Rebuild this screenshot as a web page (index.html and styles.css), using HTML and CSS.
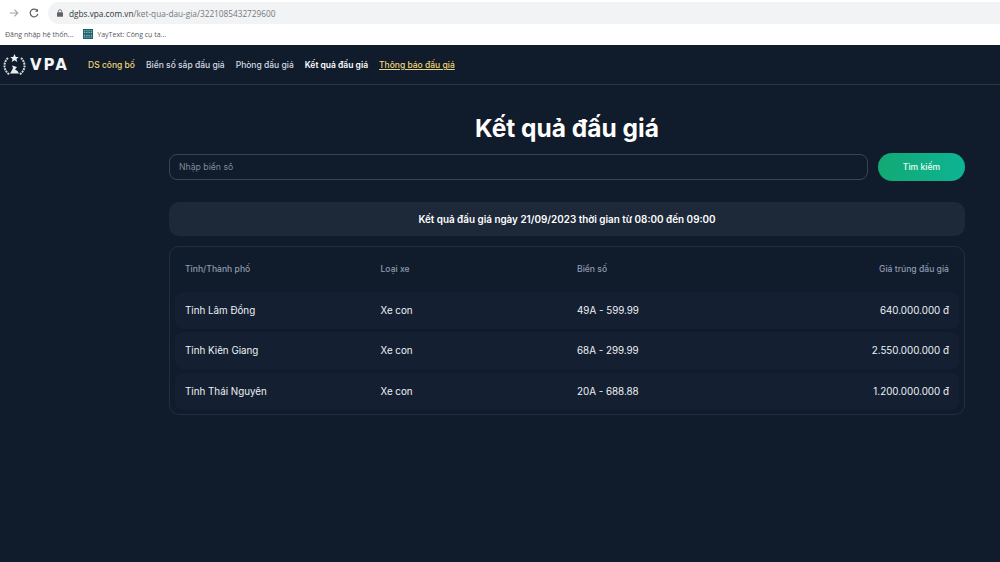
FILE: index.html
```html
<!DOCTYPE html>
<html lang="vi">
<head>
<meta charset="utf-8">
<title>Kết quả đấu giá</title>
<link rel="stylesheet" href="styles.css">
</head>
<body>
<div class="browser">
  <div class="toolbar">
    <svg class="nav-icon arrow" width="10" height="10" viewBox="0 0 12 12"><path d="M1 6h9.500M6.500 2l4 4-4 4" fill="none" stroke="#a6a6a6" stroke-width="1.400"/></svg>
    <svg class="nav-icon reload" width="10" height="10" viewBox="0 0 12 12"><path d="M10 3.600A4.600 4.600 0 1 0 10.600 7" fill="none" stroke="#5f6368" stroke-width="1.500"/><path d="M10.800 1v3.600H7.200z" fill="#5f6368"/></svg>
    <div class="address">
      <svg class="lock" width="6" height="8" viewBox="0 0 7 9"><path d="M1.500 4V2.700a2 2 0 0 1 4 0V4" fill="none" stroke="#5f6368" stroke-width="1"/><rect y="3.600" width="7" height="5.400" rx="1" fill="#5f6368"/></svg>
      <span class="url-host">dgbs.vpa.com.vn</span><span class="url-path">/ket-qua-dau-gia/3221085432729600</span>
    </div>
  </div>
  <div class="bookmarks">
    <span class="bookmark">Đăng nhập hệ thốn...</span>
    <svg class="favicon" width="10" height="10" viewBox="0 0 11 11"><rect width="11" height="11" fill="#17616b"/><path d="M1 2h9M1 4h9M1 7h9M1 9h9" stroke="#d7e6e6" stroke-width="1" stroke-dasharray="1 1"/></svg>
    <span class="bookmark">YayText: Công cụ ta...</span>
  </div>
</div>
<header class="site-header">
  <div class="logo">
    <svg width="25" height="24" viewBox="0 0 25 24">
      <path d="M12.500 1l1.300 3h3l-2.400 2 .9 3-2.800-1.700L9.700 9l.9-3-2.400-2h3z" fill="#f1f3f5"/>
      <path d="M6 5C1.500 9 .6 17 7.500 21.500M19 5c4.500 4 5.400 12-1.500 16.500" fill="none" stroke="#cfd4da" stroke-width="2" stroke-dasharray="2 .8"/>
      <path d="M8 20.500h9l-1.500-2.500H9.500zM10 12.500l5 1.500-2 2.500 2.500 1.500h-6l1.500-3z" fill="#e8ebee"/>
    </svg>
    <span class="logo-text">VPA</span>
  </div>
  <nav class="nav">
    <a class="nav-link gold">DS công bố</a>
    <a class="nav-link">Biển số sắp đấu giá</a>
    <a class="nav-link">Phòng đấu giá</a>
    <a class="nav-link active">Kết quả đấu giá</a>
    <a class="nav-link gold underlined">Thông báo đấu giá</a>
  </nav>
</header>
<main class="content">
  <h1 class="title">Kết quả đấu giá</h1>
  <div class="search">
    <input class="search-input" type="text" placeholder="Nhập biển số">
    <button class="search-button" type="button">Tìm kiếm</button>
  </div>
  <div class="banner">Kết quả đấu giá ngày 21/09/2023 thời gian từ 08:00 đến 09:00</div>
  <section class="results">
    <div class="row head">
      <span>Tỉnh/Thành phố</span><span>Loại xe</span><span>Biển số</span><span class="price">Giá trúng đấu giá</span>
    </div>
    <div class="row item">
      <span>Tỉnh Lâm Đồng</span><span>Xe con</span><span>49A - 599.99</span><span class="price">640.000.000 đ</span>
    </div>
    <div class="row item">
      <span>Tỉnh Kiên Giang</span><span>Xe con</span><span>68A - 299.99</span><span class="price">2.550.000.000 đ</span>
    </div>
    <div class="row item">
      <span>Tỉnh Thái Nguyên</span><span>Xe con</span><span>20A - 688.88</span><span class="price">1.200.000.000 đ</span>
    </div>
  </section>
</main>
</body>
</html>
```
FILE: styles.css
```css
* { box-sizing: border-box; }
html, body { margin: 0; height: 100%; overflow: hidden; }
body { background: #101b2b; font-family: Inter, "Noto Sans", sans-serif; color: #f4f6f8; }

.browser { height: 45px; background: #fff; font-family: "Open Sans", "Noto Sans", sans-serif; }
.toolbar { height: 26px; display: flex; align-items: center; }
.nav-icon { flex: none; }
.arrow { margin-left: 9px; }
.reload { margin-left: 10px; }
.address { flex: 1; height: 22px; margin-left: 9px; background: #f1f3f4; border-radius: 11px 0 0 11px; display: flex; align-items: center; padding-left: 9px; font-size: 8.250px; }
.lock { margin-right: 6px; }
.url-host { color: #33373b; }
.url-path { color: #75797d; }
.bookmarks { height: 16px; display: flex; align-items: center; padding-left: 5px; font-size: 7px; color: #55595d; }
.favicon { margin-left: 10px; margin-right: 4px; }

.site-header { height: 40px; border-bottom: 1px solid #2b3644; display: flex; align-items: center; }
.logo { width: 88px; display: flex; align-items: center; padding-left: 2px; gap: 3px; }
.logo-text { font-family: "DejaVu Sans", sans-serif; font-size: 15px; font-weight: 700; letter-spacing: 2px; color: #f4f6f8; }
.nav { display: flex; gap: 11px; padding-top: 1px; font-size: 8.500px; font-weight: 500; color: #d4dae1; }
.nav-link { white-space: nowrap; }
.gold { color: #efd677; }
.active { color: #fff; font-weight: 600; }
.underlined { text-decoration: underline; }

.content { width: 796px; margin-left: 169px; }
.title { margin: 28px 0 0; height: 30px; font-size: 24.500px; line-height: 30px; font-weight: 700; text-align: center; color: #fff; }
.search { display: flex; gap: 10px; align-items: center; margin-top: 10px; }
.search-input { flex: 1; height: 26px; border: 1px solid #3a4553; border-radius: 8px; background: transparent; padding: 0 9px; font: 400 8.700px Inter, sans-serif; color: #fff; outline: none; }
.search-input::placeholder { color: #7f8a99; opacity: 1; }
.search-button { width: 87px; height: 28px; border: 0; border-radius: 14px; background: linear-gradient(90deg, #13a974, #0db494); color: #f1fff9; font: 500 8.600px Inter, sans-serif; }
.banner { height: 34px; margin-top: 21px; border-radius: 10px; background: #1d2838; display: flex; align-items: center; justify-content: center; font-size: 9.900px; font-weight: 600; color: #fff; }
.results { height: 169px; margin-top: 10px; border: 1px solid #222e3e; border-radius: 10px; padding: 0 5px; }
.row { display: grid; grid-template-columns: 195.500px 196.500px 1fr 1fr; align-items: center; padding: 0 10px; }
.head { height: 44.500px; font-size: 8.600px; font-weight: 500; color: #8f9cb0; }
.item { height: 37px; margin-bottom: 3.500px; border-radius: 8px; background: #142032; font-size: 9.800px; color: #eef1f4; }
.price { text-align: right; }
```
